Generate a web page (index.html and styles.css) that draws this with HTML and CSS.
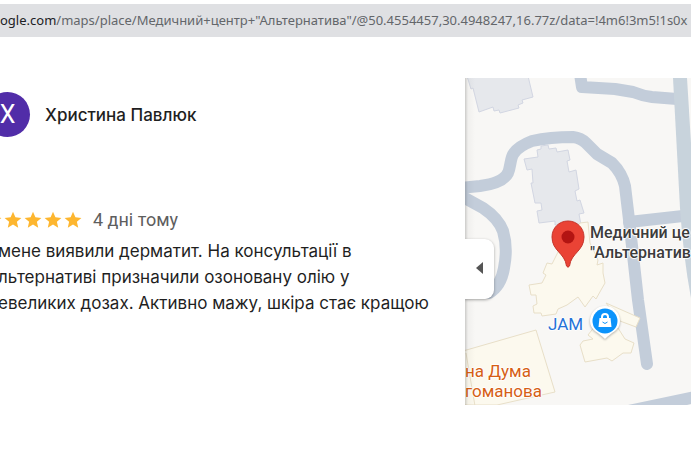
FILE: index.html
```
<!DOCTYPE html>
<html lang="uk">
<head>
  <meta charset="UTF-8">
  <title>Медичний центр "Альтернатива"</title>
  <link rel="stylesheet" href="styles.css">
</head>
<body>
  <header class="address-bar"><span class="host">ogle.com</span>/maps/place/Медичний+центр+"Альтернатива"/@50.4554457,30.4948247,16.77z/data=!4m6!3m5!1s0x</header>

  <main class="content">
    <article class="review">
      <div class="author">
        <div class="avatar">Х</div>
        <h1 class="name">Христина Павлюк</h1>
      </div>
      <div class="rating">
        <svg class="stars" viewBox="0 0 83 18" role="img" aria-label="5 з 5">
          <defs>
            <path id="star" d="M9 0.8L11.4 6.3L17.4 6.9L12.9 10.8L14.2 16.7L9 13.6L3.8 16.7L5.1 10.8L0.6 6.9L6.6 6.3Z"/>
          </defs>
          <use href="#star" x="-16"/>
          <use href="#star" x="4"/>
          <use href="#star" x="24"/>
          <use href="#star" x="44"/>
          <use href="#star" x="64"/>
        </svg>
        <span class="date">4 дні тому</span>
      </div>
      <p class="text">мене виявили дерматит. На консультації в<br>льтернативі призначили озоновану олію у<br>евеликих дозах. Активно мажу, шкіра стає кращою</p>
    </article>

    <section class="map">
      <svg class="map-canvas" viewBox="0 0 226 327" preserveAspectRatio="xMinYMin slice">
        <!-- roads -->
        <g class="road">
          <path d="M115 -4L117 9L150 11L168 14Q178 18 187 19L212 21"/>
          <path d="M-4 110L15 108Q38 105 43 95C46 88 45 80 49 75Q54 68 67 63Q85 59 108 59Q116 60 121 65L132 76L147 85Q157 95 160 108L165 150L173 222L182 286"/>
          <path d="M164 144L218 138"/>
          <path d="M-4 118L18 130Q33 140 38 153Q43 170 39 190Q36 208 24 215"/>
        </g>
        <path class="main-road" d="M208 0H222L230 130V240Q219 190 215 130Z"/>
        <path class="road-area" d="M163 327L230 313V325L222 327Z"/>
        <!-- buildings -->
        <g class="building">
          <path d="M2 -2L6 11L8 10L14 34L28 29L29 33L34 32L35 35L54 30L53 27L58 25L57 22L68 19L63 -2Z"/>
          <path d="M59 81L73 79L72 72L76 71L76 68L83 67L84 71L91 70L92 74L103 72L105 82L102 83L104 94L111 92L114 111L110 113L112 123L115 122L119 135L114 136L116 147H90V143L74 145L72 133L77 132L76 125L70 125L66 105L68 105L67 91L62 92Z"/>
        </g>
        <g class="place">
          <path d="M115 145L123 144L125 165L133 182L132 187L138 185V195L140 205L136 212L131 221L128 218L120 229L113 219L102 227L93 231L91 236L77 238L76 235L69 235L68 228L72 226L71 217L66 217L64 207L77 205L81 197L78 195L82 185L87 186L95 170Z"/>
          <path d="M141 225L175 240L171 249L155 243Z"/>
          <path d="M120 284L115 267L118 263L128 261L123 257L130 248L153 250L160 261L169 265L166 275L158 275L147 283L142 280Z"/>
          <path d="M-2 273L71 252L90 314L32 327H-2Z"/>
          <path d="M1 275L10 328"/>
        </g>
      </svg>

      <svg class="pin" viewBox="0 0 34 48">
        <path class="pin-body" d="M17 1C8 1 1 8 1 17C1 31 14 33 15.500 46Q17 48.500 18.500 46C20 33 33 31 33 17C33 8 26 1 17 1Z"/>
        <circle class="pin-dot" cx="17" cy="17" r="6.500"/>
      </svg>
      <span class="label clinic">Медичний це<br>"Альтернатив</span>

      <svg class="shop" viewBox="0 0 32 36">
        <path class="shop-back" d="M16 1A15 15 0 0 0 1 16C1 26 10 27 16 34C22 27 31 26 31 16A15 15 0 0 0 16 1Z"/>
        <circle class="shop-disc" cx="16" cy="16" r="12.500"/>
        <path class="shop-bag" d="M10.500 13H21.500L22.500 22H9.500Z"/>
        <path class="shop-handle" d="M13 14V12A3 3 0 0 1 19 12V14"/>
        <path class="shop-smile" d="M13.500 17Q16 20 18.500 17"/>
      </svg>
      <span class="label jam">JAM</span>
      <span class="label duma">на Дума<br>гоманова</span>

      <button class="collapse" type="button" aria-label="Згорнути бічну панель">
        <svg viewBox="0 0 7 12"><path d="M7 0V12L0 6Z"/></svg>
      </button>
    </section>
  </main>
</body>
</html>
```
FILE: styles.css
```
* {
  box-sizing: border-box;
}
body {
  margin: 0;
  padding-top: 4px;
  background: #fff;
  overflow: hidden;
  font-family: Roboto, sans-serif;
}
.address-bar {
  background: #dfe0e3;
  color: #63666a;
  font: 13px/33px "Noto Sans", sans-serif;
  white-space: nowrap;
  overflow: hidden;
}
.host {
  color: #202124;
}
.content {
  display: flex;
  margin-top: 41px;
}
.review {
  flex: 0 0 465px;
  color: #1f1f1f;
}
.author {
  display: flex;
  align-items: center;
  gap: 15px;
  margin-top: 14px;
}
.avatar {
  width: 45px;
  height: 45px;
  margin-left: -15px;
  border-radius: 50%;
  background: #512da8;
  color: #fff;
  font-size: 25px;
  line-height: 45px;
  text-align: center;
}
.name {
  margin: 0;
  font-family: Inter, sans-serif;
  font-size: 17px;
  font-weight: 500;
}
.rating {
  display: flex;
  align-items: center;
  gap: 10px;
  margin-top: 71px;
}
.stars {
  width: 83px;
  height: 18px;
  fill: #fdb62f;
}
.date {
  color: #5e5e5e;
  font-size: 18px;
  line-height: 24px;
}
.text {
  margin: 6px 0 0 -2px;
  font-family: Inter, sans-serif;
  font-size: 17px;
  line-height: 26px;
  white-space: nowrap;
}
.map {
  position: relative;
  flex: 1;
  min-width: 0;
  overflow: hidden;
  background: #f8f7f5;
}
.map::after {
  content: "";
  position: absolute;
  top: 0;
  bottom: 0;
  left: 0;
  width: 10px;
  background: linear-gradient(to right, rgba(0,0,0,0.18), rgba(0,0,0,0.03) 30%, transparent);
}
.map-canvas {
  display: block;
  width: 100%;
  height: 327px;
}
.road {
  fill: none;
  stroke: #c3cdda;
  stroke-width: 12;
  stroke-linecap: round;
  stroke-linejoin: round;
}
.road-area {
  fill: #c3cdda;
}
.main-road {
  fill: #c8d3dc;
}
.building {
  fill: #e6e8ec;
  stroke: #d2d6e2;
}
.place {
  fill: #fcf9ee;
  stroke: #e8dfc8;
}
.pin, .shop, .label {
  position: absolute;
}
.pin {
  left: 86px;
  top: 142px;
  width: 34px;
  height: 48px;
}
.pin-body {
  fill: #ea4335;
  stroke: #c5352b;
}
.pin-dot {
  fill: #b31412;
}
.shop {
  left: 124px;
  top: 227px;
  width: 32px;
  height: 36px;
  filter: drop-shadow(0 1px 1px rgba(0,0,0,0.3));
}
.shop-back, .shop-bag {
  fill: #fff;
}
.shop-disc {
  fill: #0b93fb;
}
.shop-handle, .shop-smile {
  fill: none;
  stroke: #fff;
  stroke-width: 2;
}
.shop-smile {
  stroke: #0b93fb;
  stroke-width: 1;
}
.label {
  font-size: 17px;
  line-height: 20px;
  white-space: nowrap;
  text-shadow: 1px 0 1px #fff, -1px 0 1px #fff, 0 1px 1px #fff, 0 -1px 1px #fff;
}
.clinic {
  left: 125px;
  top: 145px;
  color: #3c3c3c;
  font-size: 16px;
  font-weight: 500;
}
.jam {
  left: 83px;
  top: 236px;
  color: #2672d8;
}
.duma {
  left: 0;
  top: 283px;
  color: #d65f16;
}
.collapse {
  position: absolute;
  z-index: 1;
  left: 0;
  top: 161px;
  width: 29px;
  height: 60px;
  padding: 0;
  border: 0;
  border-radius: 0 9px 9px 0;
  background: #fff;
  box-shadow: 0 1px 3px rgba(0,0,0,0.35);
}
.collapse svg {
  width: 7px;
  height: 12px;
  fill: #555;
}
```
